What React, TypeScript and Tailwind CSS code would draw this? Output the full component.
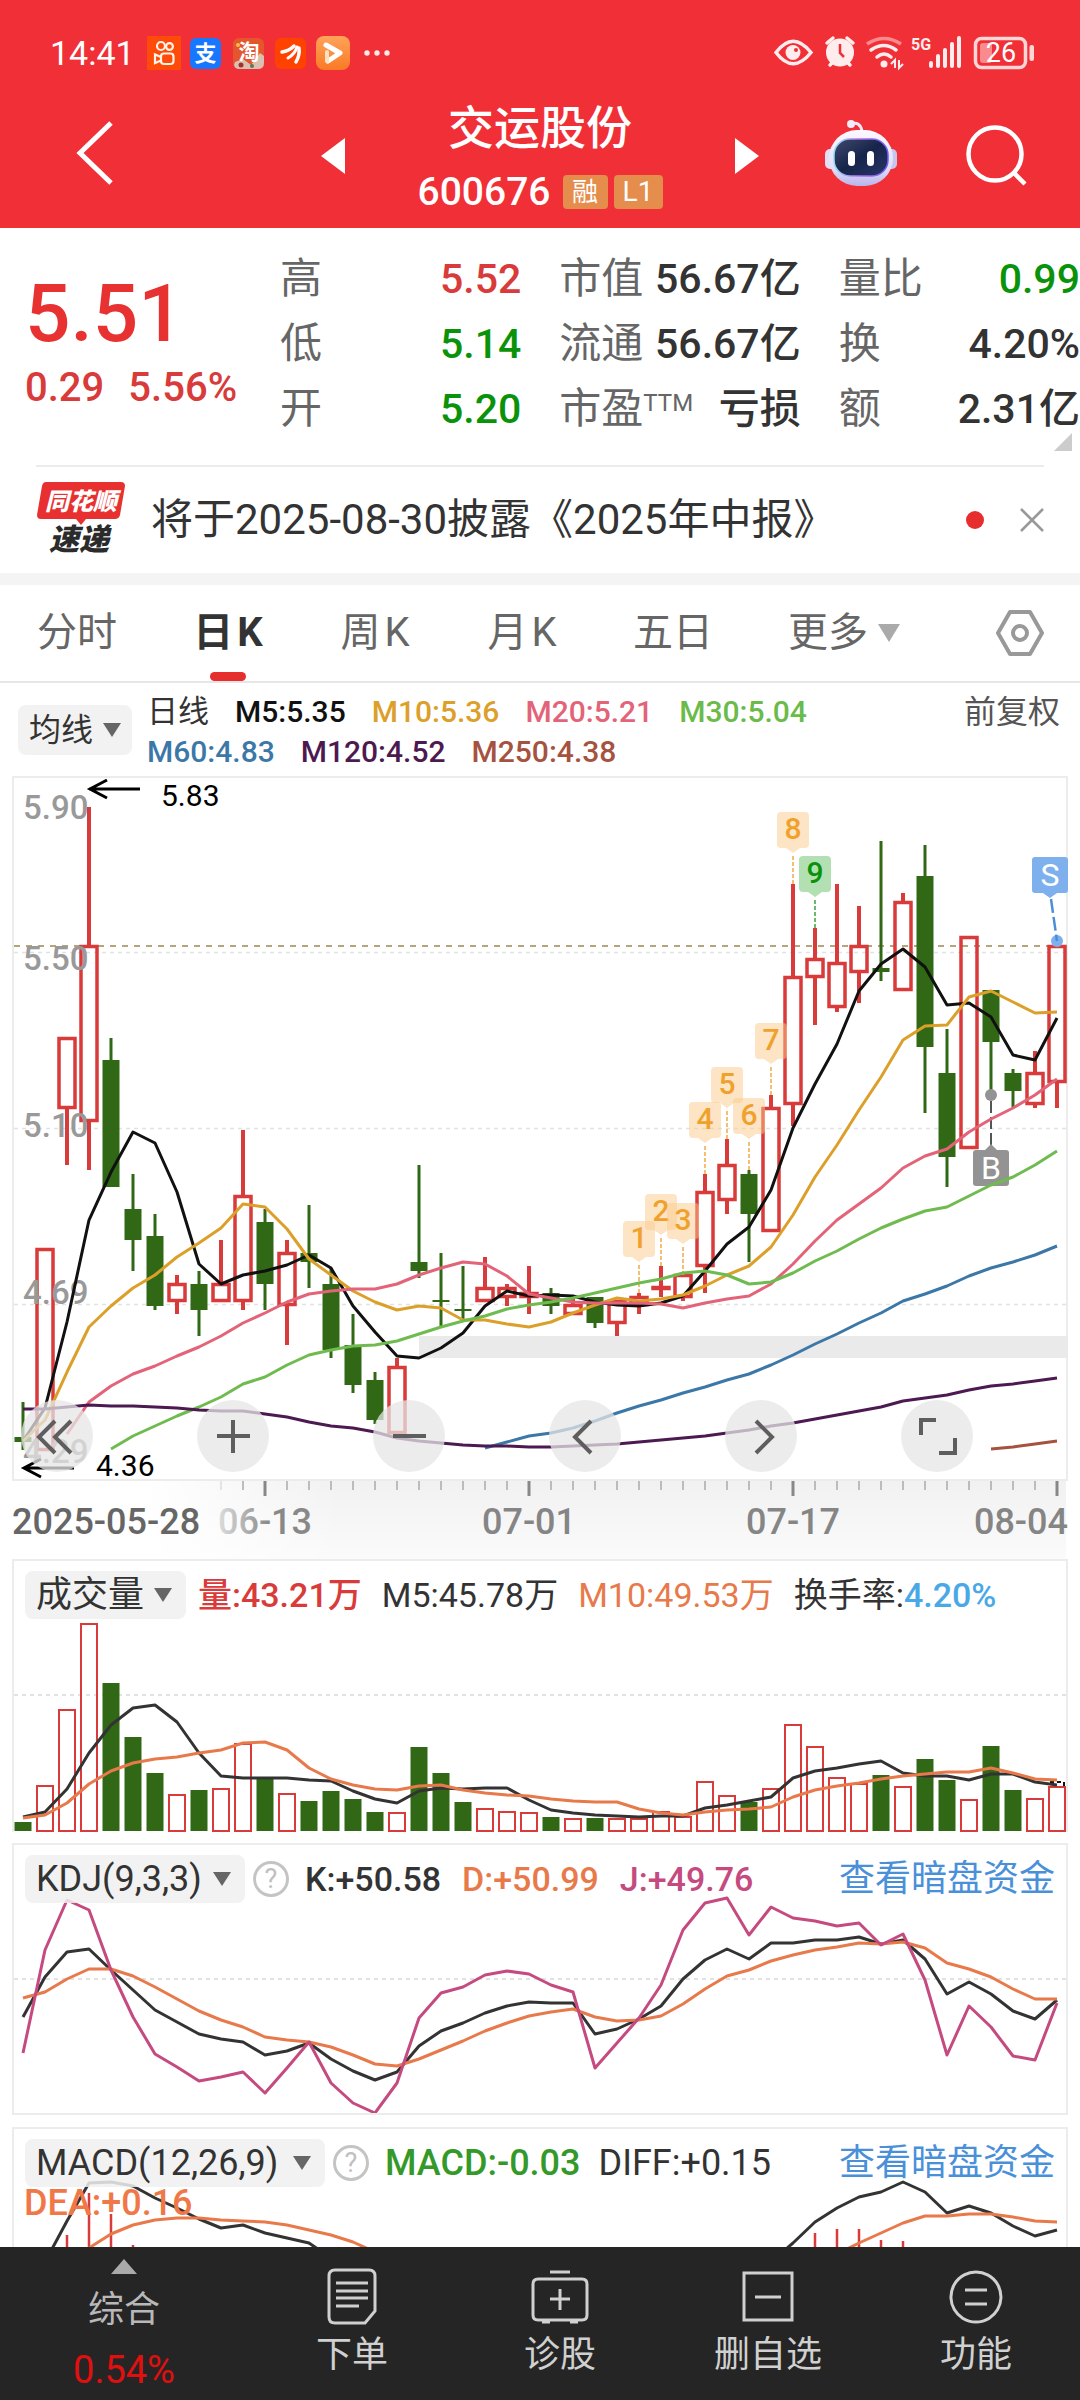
import React from "react";

const RED = "#d93a3a";
const GREEN = "#306815";
const X0 = 23;
const STEP = 22;
const xOf = (i: number) => X0 + STEP * i;

type Candle = [up: 0 | 1, high: number, top: number, bottom: number, low: number];

const candles: Candle[] = [
  [0, 1402, 1437, 1442, 1450], [1, 1248, 1248, 1451, 1451], [1, 1037, 1037, 1109, 1165], [1, 807, 945, 1122, 1170],
  [0, 1038, 1060, 1187, 1187], [0, 1174, 1209, 1240, 1271], [0, 1214, 1236, 1306, 1310], [1, 1275, 1283, 1302, 1314],
  [0, 1271, 1284, 1310, 1336], [1, 1240, 1283, 1302, 1302], [1, 1130, 1195, 1302, 1310], [0, 1209, 1222, 1284, 1310],
  [1, 1240, 1252, 1306, 1345], [0, 1205, 1253, 1262, 1288], [0, 1268, 1284, 1350, 1358], [0, 1314, 1345, 1385, 1393],
  [0, 1372, 1380, 1420, 1424], [1, 1358, 1366, 1434, 1434], [0, 1165, 1262, 1271, 1278], [0, 1253, 1300, 1302, 1327],
  [0, 1266, 1309, 1311, 1320], [1, 1257, 1287, 1302, 1302], [1, 1284, 1287, 1298, 1306], [1, 1266, 1292, 1298, 1314],
  [0, 1288, 1293, 1306, 1314], [1, 1298, 1304, 1315, 1315], [0, 1297, 1297, 1323, 1328], [1, 1300, 1300, 1324, 1336],
  [1, 1293, 1296, 1306, 1314], [1, 1266, 1286, 1290, 1297], [1, 1274, 1274, 1298, 1301], [1, 1174, 1191, 1267, 1293],
  [1, 1139, 1164, 1201, 1214], [0, 1170, 1174, 1214, 1262], [1, 1095, 1107, 1232, 1232], [1, 884, 976, 1105, 1126],
  [1, 928, 958, 978, 1025], [1, 884, 962, 1008, 1012], [1, 906, 945, 973, 1003], [0, 841, 968, 972, 981],
  [1, 893, 901, 991, 991], [0, 845, 876, 1047, 1113], [0, 1029, 1073, 1157, 1187], [1, 936, 936, 1149, 1149],
  [0, 990, 990, 1042, 1095], [0, 1069, 1073, 1091, 1107], [1, 1051, 1072, 1105, 1108], [1, 941, 945, 1083, 1108],
];

const averages: { color: string; start: number; ys: number[] }[] = [
  { color: "#111111", start: 0, ys: [1441, 1408, 1322, 1220, 1172, 1132, 1143, 1192, 1264, 1284, 1275, 1271, 1265, 1255, 1268, 1306, 1332, 1356, 1358, 1348, 1333, 1306, 1291, 1296, 1295, 1296, 1302, 1305, 1306, 1303, 1296, 1271, 1244, 1227, 1190, 1128, 1084, 1044, 991, 964, 949, 967, 1005, 1003, 1017, 1055, 1060, 1018] },
  { color: "#dca02a", start: 0, ys: [1441, 1420, 1372, 1327, 1306, 1288, 1275, 1257, 1243, 1228, 1204, 1207, 1229, 1259, 1275, 1291, 1302, 1310, 1306, 1308, 1320, 1320, 1324, 1327, 1322, 1313, 1305, 1298, 1301, 1299, 1295, 1286, 1275, 1266, 1247, 1215, 1177, 1145, 1110, 1077, 1040, 1026, 1025, 997, 991, 1002, 1013, 1012] },
  { color: "#e36378", start: 2, ys: [1434, 1402, 1386, 1374, 1366, 1356, 1347, 1336, 1323, 1313, 1302, 1294, 1291, 1289, 1289, 1284, 1275, 1268, 1262, 1264, 1276, 1294, 1298, 1302, 1303, 1303, 1303, 1304, 1308, 1303, 1299, 1296, 1284, 1264, 1241, 1220, 1204, 1188, 1168, 1156, 1149, 1132, 1119, 1108, 1095, 1079] },
  { color: "#6fbb50", start: 4, ys: [1449, 1436, 1426, 1416, 1407, 1397, 1384, 1377, 1365, 1355, 1350, 1346, 1345, 1341, 1334, 1327, 1321, 1316, 1309, 1305, 1302, 1298, 1293, 1288, 1283, 1279, 1273, 1271, 1275, 1284, 1282, 1273, 1261, 1251, 1239, 1228, 1219, 1211, 1207, 1196, 1185, 1177, 1165, 1151] },
  { color: "#3b78a8", start: 21, ys: [1448, 1442, 1436, 1433, 1428, 1421, 1413, 1406, 1400, 1393, 1387, 1380, 1374, 1365, 1355, 1344, 1334, 1323, 1313, 1301, 1294, 1286, 1276, 1268, 1262, 1255, 1246] },
  { color: "#4c1a50", start: 0, ys: [1409, 1409, 1407, 1405, 1406, 1406, 1407, 1408, 1410, 1411, 1411, 1414, 1417, 1422, 1426, 1428, 1432, 1438, 1441, 1443, 1445, 1446, 1446, 1447, 1447, 1446, 1445, 1444, 1442, 1440, 1438, 1436, 1433, 1430, 1426, 1423, 1419, 1415, 1411, 1407, 1401, 1398, 1395, 1390, 1386, 1384, 1381, 1378] },
  { color: "#a5523f", start: 44, ys: [1449, 1447, 1444, 1441] },
];

const volumeTops = [1822, 1785, 1709, 1623, 1683, 1737, 1773, 1794, 1790, 1788, 1743, 1778, 1793, 1801, 1791, 1799, 1812, 1812, 1747, 1773, 1802, 1808, 1811, 1812, 1817, 1818, 1818, 1818, 1818, 1811, 1816, 1781, 1795, 1802, 1788, 1724, 1746, 1777, 1783, 1775, 1786, 1759, 1780, 1799, 1746, 1790, 1798, 1786];
const volumeM5 = [1817, 1812, 1789, 1753, 1725, 1708, 1705, 1722, 1753, 1776, 1778, 1778, 1778, 1780, 1781, 1791, 1799, 1803, 1791, 1788, 1789, 1788, 1788, 1800, 1810, 1813, 1815, 1816, 1817, 1816, 1816, 1808, 1805, 1801, 1797, 1778, 1771, 1768, 1764, 1761, 1773, 1776, 1776, 1780, 1774, 1774, 1782, 1785];
const volumeM10 = [1818, 1815, 1803, 1784, 1771, 1763, 1759, 1757, 1753, 1750, 1743, 1742, 1750, 1768, 1779, 1785, 1789, 1790, 1786, 1785, 1790, 1793, 1795, 1796, 1799, 1801, 1802, 1802, 1809, 1813, 1815, 1812, 1810, 1809, 1807, 1797, 1790, 1786, 1783, 1779, 1776, 1774, 1772, 1772, 1768, 1773, 1779, 1780];

const kLine = [2017, 1977, 1952, 1949, 1970, 1990, 2010, 2022, 2034, 2039, 2042, 2055, 2051, 2043, 2059, 2071, 2080, 2072, 2046, 2031, 2023, 2013, 2006, 2002, 2003, 2003, 2034, 2029, 2019, 2006, 1979, 1960, 1949, 1959, 1943, 1943, 1940, 1940, 1937, 1944, 1940, 1959, 1994, 1982, 1994, 2011, 2019, 2000];
const dLine = [1998, 1992, 1979, 1969, 1969, 1976, 1987, 1999, 2011, 2020, 2027, 2037, 2040, 2042, 2047, 2055, 2064, 2066, 2059, 2050, 2041, 2031, 2023, 2016, 2012, 2009, 2017, 2021, 2020, 2016, 2004, 1989, 1976, 1970, 1961, 1955, 1950, 1947, 1943, 1944, 1942, 1948, 1963, 1969, 1977, 1989, 1999, 1999];
const jLine = [2053, 1950, 1900, 1910, 1970, 2017, 2054, 2067, 2081, 2077, 2072, 2093, 2068, 2042, 2083, 2103, 2113, 2083, 2018, 1993, 1987, 1975, 1971, 1974, 1985, 1992, 2068, 2043, 2018, 1985, 1930, 1903, 1898, 1935, 1907, 1918, 1921, 1926, 1923, 1945, 1934, 1980, 2055, 2006, 2027, 2056, 2060, 2003];

const diffLeft = [2262, 2221, 2183, 2182, 2186, 2198, 2208, 2219, 2228, 2225, 2233, 2238, 2243, 2258];
const diffRight = [2262, 2243, 2222, 2208, 2197, 2192, 2182, 2192, 2213, 2206, 2213, 2226, 2236, 2230];
const deaLeft = [2248, 2234, 2225, 2220, 2218, 2218, 2220, 2221, 2222, 2225, 2230, 2235, 2242, 2252];
const deaRight = [2254, 2243, 2233, 2223, 2216, 2216, 2214, 2214, 2217, 2221, 2222];
const macdBars: [number, number][] = [[2, 2235], [3, 2193], [4, 2214], [5, 2245], [36, 2233], [37, 2229], [38, 2229], [39, 2240], [40, 2241]];

const counts: [index: number, high: number, label: string][] = [
  [28, 1293, "1"], [29, 1266, "2"], [30, 1275, "3"], [31, 1174, "4"], [32, 1139, "5"],
  [33, 1170, "6"], [34, 1095, "7"], [35, 884, "8"], [36, 928, "9"],
];

function Line({ ys, color, start = 0, width = 3 }: { ys: number[]; color: string; start?: number; width?: number }) {
  return (
    <polyline
      points={ys.map((y, k) => `${xOf(start + k)},${y}`).join(" ")}
      fill="none"
      stroke={color}
      strokeWidth={width}
      strokeLinejoin="round"
    />
  );
}

function Caret({ className = "text-[#666]" }: { className?: string }) {
  return (
    <svg viewBox="0 0 18 14" className={`h-[14px] w-[18px] shrink-0 ${className}`} aria-hidden="true">
      <path d="M0 0H18L9 14Z" fill="currentColor" />
    </svg>
  );
}

function StatusBar() {
  return (
    <div className="flex items-center justify-between pt-8 pr-[46px] pl-[50px] text-white">
      <div className="flex h-[42px] items-center">
        <span className="w-[97px] text-[34px] leading-[42px]">14:41</span>
        <svg viewBox="0 0 34 34" className="size-[34px]" aria-hidden="true">
          <rect width="34" height="34" fill="#ff4b0a" />
          <g fill="none" stroke="#fff3e6" strokeWidth="2.2">
            <circle cx="14" cy="10" r="4" />
            <circle cx="22.500" cy="10.500" r="3.400" />
            <rect x="14" y="17.500" width="12.500" height="10.500" rx="3" />
            <path d="M14 21L8 18.500V27L14 24.500" />
          </g>
        </svg>
        <svg viewBox="0 0 31 31" className="ml-[9px] size-[31px]" aria-hidden="true">
          <rect width="31" height="31" rx="6" fill="#1777ff" />
          <text x="15.500" y="23" fontSize="22" fontWeight="700" textAnchor="middle" fill="#fff">支</text>
        </svg>
        <svg viewBox="0 0 31 31" className="ml-3 size-[31px]" aria-hidden="true">
          <rect width="31" height="31" rx="6" fill="#e4572e" />
          <path d="M2 24L10 21L18 27L27 15L31 18V25Q31 31 25 31H6Q2 31 1 27Z" fill="#d9c0b0" />
          <circle cx="8" cy="27" r="2.500" fill="#a5302a" />
          <circle cx="19" cy="28" r="2" fill="#5b7a52" />
          <circle cx="5" cy="7" r="2" fill="#f9c23c" />
          <text x="16" y="21" fontSize="21" fontWeight="700" textAnchor="middle" fill="#fff">淘</text>
        </svg>
        <svg viewBox="0 0 31 31" className="ml-[11px] size-[31px]" aria-hidden="true">
          <rect width="31" height="31" rx="6" fill="#ff4200" />
          <g fill="none" stroke="#fff" strokeLinecap="round">
            <path d="M7 14Q14 13 19 8" strokeWidth="3.500" />
            <path d="M13 20Q20 16 22 9" strokeWidth="3" />
            <path d="M21 24Q25 17 24 10" strokeWidth="3.500" />
          </g>
        </svg>
        <svg viewBox="0 0 34 34" className="ml-[10px] size-[34px]" aria-hidden="true">
          <defs>
            <linearGradient id="play" x1="0" y1="0" x2="0" y2="1">
              <stop offset="0" stopColor="#ffa35a" />
              <stop offset="1" stopColor="#f97a25" />
            </linearGradient>
          </defs>
          <rect width="34" height="34" rx="8" fill="url(#play)" />
          <path d="M10 9L24 17L12 25" fill="none" stroke="#fff" strokeWidth="5" strokeLinejoin="round" strokeLinecap="round" />
          <path d="M11 16V25" stroke="#ffe0c2" strokeWidth="4" strokeLinecap="round" />
        </svg>
        <svg viewBox="0 0 26 6" className="ml-[14px] h-[6px] w-[26px]" fill="#ffe9e9" aria-hidden="true">
          <circle cx="3" cy="3" r="2.700" /><circle cx="13" cy="3" r="2.700" /><circle cx="23" cy="3" r="2.700" />
        </svg>
      </div>
      <svg viewBox="772 34 262 38" className="h-[38px] w-[262px]" aria-hidden="true">
        <g fill="none" stroke="#ffecec" strokeWidth="3.500">
          <path d="M776 52.500Q793 30 811 52.500Q793 75 776 52.500Z" />
          <path d="M827 43L833 38M853 43L847 38M830 65L834 61M850 65L846 61" strokeLinecap="round" />
          <path d="M871 50Q884 41 896 50M877 57Q884 51 891 57" strokeLinecap="round" />
          <path d="M867 44Q884 33 901 44" stroke="#f98a8e" />
          <rect x="975.500" y="38.500" width="50" height="29" rx="6" stroke="#ffd5d6" />
        </g>
        <circle cx="793" cy="52.500" r="7.500" fill="#ffecec" />
        <circle cx="796" cy="50" r="2" fill="#f12f37" />
        <circle cx="840" cy="52.500" r="14" fill="#ffecec" />
        <path d="M840 44V53L844 57" fill="none" stroke="#f12f37" strokeWidth="2.500" />
        <circle cx="884" cy="64" r="3.500" fill="#ffecec" />
        <path d="M895 68V60L891 64M899 60V68L903 64" fill="none" stroke="#ffecec" strokeWidth="2" />
        <text x="911" y="50" fontSize="16" fontWeight="700" fill="#ffecec">5G</text>
        <path d="M931 63V66M938 56V66M945 50V66M952 44V66M959 38V66" stroke="#ffecec" strokeWidth="4" strokeLinecap="round" />
        <rect x="980" y="43" width="12" height="20" rx="3" fill="#f98a8e" />
        <rect x="1029.500" y="45" width="4.500" height="16" rx="2" fill="#ffd5d6" />
        <text x="1001" y="62" fontSize="27" textAnchor="middle" fill="#fff">26</text>
      </svg>
    </div>
  );
}

function Header() {
  return (
    <header className="flex h-[154px] items-start pr-[53px] pl-[76px] text-white">
      <button type="button" aria-label="返回" className="mt-[46px]">
        <svg viewBox="0 0 38 66" className="h-[66px] w-[38px]" fill="none" stroke="#fff" strokeWidth="5">
          <path d="M35 3L4 33L35 63" />
        </svg>
      </button>
      <div className="flex flex-1 items-start justify-end pr-[65px]">
        <button type="button" aria-label="上一只" className="mt-[64px]">
          <svg viewBox="0 0 24 36" className="h-9 w-6" fill="#fff"><path d="M24 0V36L0 18Z" /></svg>
        </button>
        <div className="mt-[27px] flex w-[390px] flex-col items-center">
          <h1 className="text-[46px] leading-[54px] font-medium">交运股份</h1>
          <div className="mt-[13px] flex items-center gap-[6px]">
            <span className="mr-[6px] text-[39px] leading-[48px] font-medium">600676</span>
            <span className="flex h-[34px] w-[45px] items-center justify-center rounded-[4px] bg-[#e58d4c] text-[26px] leading-[34px]">融</span>
            <span className="flex h-[34px] w-[49px] items-center justify-center rounded-[4px] bg-[#e58d4c] text-[28px] leading-[34px]">L1</span>
          </div>
        </div>
        <button type="button" aria-label="下一只" className="mt-[64px]">
          <svg viewBox="0 0 24 36" className="h-9 w-6" fill="#fff"><path d="M0 0V36L24 18Z" /></svg>
        </button>
      </div>
      <button type="button" aria-label="智能助手" className="mt-[44px]">
        <svg viewBox="824 118 74 70" className="h-[70px] w-[74px]">
          <defs>
            <linearGradient id="shell" x1="0" y1="0" x2="0" y2="1">
              <stop offset="0" stopColor="#fdf9ff" />
              <stop offset="0.700" stopColor="#e0dcf8" />
              <stop offset="1" stopColor="#b9b4ea" />
            </linearGradient>
            <linearGradient id="visor" x1="0" y1="0" x2="1" y2="1">
              <stop offset="0" stopColor="#3f4a6c" />
              <stop offset="0.500" stopColor="#17244a" />
              <stop offset="1" stopColor="#28366a" />
            </linearGradient>
            <linearGradient id="rim" x1="0" y1="0" x2="1" y2="0">
              <stop offset="0" stopColor="#8fdcf5" />
              <stop offset="0.500" stopColor="#b46be8" />
              <stop offset="1" stopColor="#6a5cf0" />
            </linearGradient>
          </defs>
          <path d="M851 124Q860 121 862 131" fill="none" stroke="#eceaf8" strokeWidth="3" />
          <circle cx="851" cy="124" r="4" fill="#f3ecfb" />
          <rect x="825" y="149" width="12" height="20" rx="5" fill="#e2def6" />
          <rect x="885" y="149" width="12" height="20" rx="5" fill="#c9c4ee" />
          <rect x="829" y="130" width="64" height="56" rx="28" fill="url(#shell)" />
          <rect x="834" y="139" width="54" height="37" rx="16" fill="url(#visor)" stroke="url(#rim)" strokeWidth="1.500" />
          <rect x="848" y="151" width="7" height="15" rx="3.500" fill="#fff" />
          <rect x="867" y="151" width="7" height="15" rx="3.500" fill="#fff" />
        </svg>
      </button>
      <button type="button" aria-label="搜索" className="mt-[50px] ml-[67px]">
        <svg viewBox="0 0 62 62" className="size-[62px]" fill="none" stroke="#fff" strokeWidth="4.500">
          <circle cx="30" cy="30" r="26.500" />
          <path d="M48 48L60 60" />
        </svg>
      </button>
    </header>
  );
}

const quotes: { label: React.ReactNode; value: string; tone: string }[] = [
  { label: "高", value: "5.52", tone: "text-[#d93a3a]" },
  { label: "市值", value: "56.67亿", tone: "text-[#333]" },
  { label: "量比", value: "0.99", tone: "text-[#0a930a]" },
  { label: "低", value: "5.14", tone: "text-[#0a930a]" },
  { label: "流通", value: "56.67亿", tone: "text-[#333]" },
  { label: "换", value: "4.20%", tone: "text-[#333]" },
  { label: "开", value: "5.20", tone: "text-[#0a930a]" },
  { label: <>市盈<sup className="top-[-12px] text-[24px] leading-none">TTM</sup></>, value: "亏损", tone: "text-[#333]" },
  { label: "额", value: "2.31亿", tone: "text-[#333]" },
];

function Quote() {
  return (
    <section className="relative flex pt-[18px] pb-6">
      <div className="w-[280px] shrink-0 pl-[25px] text-[#e83232]">
        <div className="mt-[18px] text-[80px] leading-[100px] font-medium">5.51</div>
        <div className="flex gap-[24px] text-[40px] leading-[48px] font-medium text-[#d93a3a]">
          <span>0.29</span>
          <span>5.56%</span>
        </div>
      </div>
      <dl className="grid flex-1 grid-cols-3 gap-x-[38px]">
        {quotes.map((q, i) => (
          <div key={i} className="flex h-[65px] items-center justify-between whitespace-nowrap">
            <dt className="text-[42px] leading-[64px] text-[#666]">{q.label}</dt>
            <dd className={`text-[41px] leading-[64px] font-medium ${q.tone}`}>{q.value}</dd>
          </div>
        ))}
      </dl>
      <svg viewBox="0 0 18 18" className="absolute right-2 bottom-[14px] size-[18px]" aria-hidden="true">
        <path d="M18 0V18H0Z" fill="#ccc" />
      </svg>
    </section>
  );
}

function Notice() {
  return (
    <section className="mx-9 flex h-[108px] items-center border-t-2 border-[#ececec]">
      <svg viewBox="36 480 90 82" className="h-[82px] w-[90px] shrink-0 overflow-visible" role="img" aria-label="同花顺速递">
        <path d="M46 483H121Q125 483 125 487L120 516Q119 520 115 520H86L81 526L76 520H41Q37 520 37 516L42 487Q43 483 46 483Z" fill="#e83030" />
        <text x="81" y="511" fontSize="24" fontWeight="900" fontStyle="italic" textAnchor="middle" fill="#fff">同花顺</text>
        <text x="79" y="551" fontSize="30" fontWeight="900" fontStyle="italic" textAnchor="middle" fill="#2b2b2b">速递</text>
      </svg>
      <a href="#report" className="ml-[25px] flex-1 text-[42px] leading-[56px] whitespace-nowrap text-[#333]">将于2025-08-30披露《2025年中报》</a>
      <span className="size-[18px] rounded-full bg-[#e62e2e]" />
      <button type="button" aria-label="关闭" className="ml-9">
        <svg viewBox="0 0 24 24" className="size-6" stroke="#999" strokeWidth="2.500"><path d="M1 1L23 23M23 1L1 23" /></svg>
      </button>
    </section>
  );
}

function Tabs() {
  const base = "relative flex h-24 min-w-[72px] items-center justify-center gap-1 whitespace-nowrap";
  return (
    <nav className="flex items-center gap-[75px] border-b-2 border-[#e6e6e6] pr-9 pl-[37px] text-[40px] leading-[56px] text-[#666]">
      <button type="button" className={base}>分时</button>
      <button type="button" className={`${base} font-bold text-[#333]`}>
        日<span>K</span>
        <span className="absolute bottom-0 left-1/2 h-[9px] w-9 -translate-x-1/2 rounded-full bg-[#e62e2e]" />
      </button>
      <button type="button" className={base}>周<span>K</span></button>
      <button type="button" className={base}>月<span>K</span></button>
      <button type="button" className={base}>五日</button>
      <button type="button" className={`${base} gap-[10px]`}>
        更多
        <svg viewBox="0 0 22 18" className="h-[18px] w-[22px]" fill="#aaa"><path d="M0 0H22L11 18Z" /></svg>
      </button>
      <button type="button" aria-label="设置" className="ml-auto">
        <svg viewBox="0 0 48 48" className="size-12" fill="none" stroke="#999" strokeWidth="4">
          <path d="M14 3H34L46 24L34 45H14L2 24Z" strokeLinejoin="round" />
          <circle cx="24" cy="24" r="7" />
        </svg>
      </button>
    </nav>
  );
}

function AverageLegend() {
  return (
    <div className="flex items-start pr-5 pb-[4px] pl-[18px] text-[30px] leading-[40px]">
      <button type="button" className="mt-[22px] flex h-[50px] w-[114px] shrink-0 items-center justify-center gap-[10px] rounded-lg bg-[#f2f2f2] text-[32px] text-[#333]">
        均线<Caret />
      </button>
      <div className="mt-[9px] ml-[15px] flex-1">
        <div className="flex gap-[26px] font-medium whitespace-nowrap">
          <span className="text-[31px] font-normal text-[#333]">日线</span>
          <span className="text-[#111]">M5:5.35</span>
          <span className="text-[#dca02a]">M10:5.36</span>
          <span className="text-[#e36378]">M20:5.21</span>
          <span className="text-[#6abb4a]">M30:5.04</span>
          <span className="ml-auto text-[32px] font-normal text-[#555]">前复权</span>
        </div>
        <div className="flex gap-[26px] font-medium whitespace-nowrap">
          <span className="text-[#3b78a8]">M60:4.83</span>
          <span className="text-[#4c1a50]">M120:4.52</span>
          <span className="text-[#a5523f]">M250:4.38</span>
        </div>
      </div>
    </div>
  );
}

function CandleChart() {
  const tools: [string, React.ReactNode][] = [
    ["最早", <path key="a" d="M34 21L18 37L34 53M50 21L34 37L50 53" />],
    ["放大", <path key="b" d="M20 36H53M36 20V53" />],
    ["缩小", <path key="c" d="M20 36H53" />],
    ["左移", <path key="d" d="M42 21L26 37L42 53" />],
    ["右移", <path key="e" d="M31 21L47 37L31 53" />],
    ["全屏", <path key="f" d="M20 35V20H35M54 38V53H38" />],
  ];
  return (
    <section className="relative mx-3 border-2 border-[#ececec]">
      <svg viewBox="14 778 1052 701" className="block h-auto w-full overflow-visible">
        <rect x="419" y="1336" width="649" height="22" fill="#eaeaea" />
        <g stroke="#e2e2e2" strokeDasharray="4 4" strokeWidth="1.500">
          <path d="M14 952.500H1066M14 1128.500H1066M14 1304.500H1066" />
        </g>
        <path d="M14 946H1066" stroke="#b5a57c" strokeDasharray="6 6" strokeWidth="2" />
        {candles.map(([up, high, top, bottom, low], i) => {
          const x = xOf(i);
          return up ? (
            <g key={i} fill="none" stroke={RED}>
              <path d={`M${x} ${high}V${top}M${x} ${bottom}V${low}`} strokeWidth="4" />
              <rect x={x - 8} y={top + 1.5} width="16" height={Math.max(bottom - top - 3, 1)} strokeWidth="3.500" />
            </g>
          ) : (
            <g key={i} fill={GREEN}>
              <rect x={x - 1.5} y={high} width="3" height={low - high} />
              <rect x={x - 8.5} y={top} width="17" height={bottom - top} />
            </g>
          );
        })}
        <g fontSize="33" fontWeight="500" fill="#999">
          <text x="23" y="819">5.90</text>
          <text x="23" y="970">5.50</text>
          <text x="23" y="1137">5.10</text>
          <text x="23" y="1304">4.69</text>
          <text x="23" y="1463">4.29</text>
        </g>
        {counts.map(([i, high, label]) => {
          const x = xOf(i);
          const green = label === "9";
          return (
            <g key={label}>
              <path d={`M${x} ${high - 28}V${high}`} stroke={green ? "#6cb86c" : "#f5bf73"} strokeWidth="2" strokeDasharray="4 2" />
              <path
                d={`M${x - 12} ${high - 72}h24q4 0 4 4v28q0 4 -4 4h-5l-7 5l-7 -5h-5q-4 0 -4 -4v-28q0 -4 4 -4Z`}
                fill={green ? "#67c267" : "#fcc98a"}
                fillOpacity="0.500"
              />
              <text x={x} y={high - 45} fontSize="30" fontWeight="500" textAnchor="middle" fill={green ? "#0a930a" : "#f0a12c"}>{label}</text>
            </g>
          );
        })}
        <circle cx="991" cy="1095" r="6" fill="#939393" />
        <path d="M991 1101V1146" stroke="#555" strokeWidth="2" strokeDasharray="12 4" />
        <path d="M976 1150H985L991 1144L997 1150H1006Q1009 1150 1009 1153V1183Q1009 1186 1006 1186H976Q973 1186 973 1183V1153Q973 1150 976 1150Z" fill="#939393" />
        <text x="991" y="1179" fontSize="32" textAnchor="middle" fill="#fff">B</text>
        <circle cx="1057" cy="941" r="6" fill="#7eb0ee" />
        <path d="M1051 899L1057 941" stroke="#4a8fd8" strokeWidth="2.500" strokeDasharray="14 4" />
        <path d="M1035 857H1065Q1068 857 1068 860V890Q1068 893 1065 893H1057L1050 898L1043 893H1035Q1032 893 1032 890V860Q1032 857 1035 857Z" fill="#7eb0ee" />
        <text x="1050" y="886" fontSize="32" textAnchor="middle" fill="#fff">S</text>
        {averages.map((a) => <Line key={a.color} {...a} />)}
        <g fill="none" stroke="#000" strokeWidth="3">
          <path d="M140 789H89M107 780L90 789L107 798" />
          <path d="M74 1468H24M41 1459L24 1468L41 1477" />
        </g>
        <g fontSize="30" fill="#000">
          <text x="161" y="806">5.83</text>
          <text x="96" y="1476">4.36</text>
        </g>
      </svg>
      <div className="absolute right-[93px] bottom-[7px] left-[7px] flex justify-between">
        {tools.map(([name, icon]) => (
          <button key={name} type="button" aria-label={name} className="size-[72px] rounded-full bg-[#e6e6e6]/75">
            <svg viewBox="0 0 72 72" className="size-full" fill="none" stroke="#5e5e5e" strokeWidth="4">{icon}</svg>
          </button>
        ))}
      </div>
    </section>
  );
}

function DateAxis() {
  return (
    <div className="mx-[14px] bg-linear-to-b from-[#f1f1f1] to-[#fbfbfb]">
      <svg viewBox="14 1481 1052 78" className="block h-auto w-full overflow-visible">
        <defs>
          <linearGradient id="dateFade" x1="0" y1="0" x2="1" y2="0">
            <stop offset="0" stopColor="#ddd" />
            <stop offset="0.550" stopColor="#888" />
          </linearGradient>
          <linearGradient id="axisFade" x1="0" y1="0" x2="1" y2="0">
            <stop offset="0.400" stopColor="#fff" />
            <stop offset="1" stopColor="#fff" stopOpacity="0" />
          </linearGradient>
        </defs>
        <rect x="12" y="1481" width="330" height="78" fill="url(#axisFade)" />
        {candles.map((_, i) => {
          if (i < 9) return null;
          const major = i % 12 === 11;
          return <path key={i} d={`M${xOf(i)} 1481V${major ? 1496 : 1490}`} stroke={major ? "#888" : i === 9 ? "#ddd" : "#aaa"} strokeWidth={major ? 3 : 1.5} />;
        })}
        <g fontSize="36" fontWeight="500" fill="#858585" textAnchor="middle">
          <text x="12" y="1534" textAnchor="start" fill="#666">2025-05-28</text>
          <text x="265" y="1534" fill="url(#dateFade)">06-13</text>
          <text x="529" y="1534">07-01</text>
          <text x="793" y="1534">07-17</text>
          <text x="1068" y="1534" textAnchor="end">08-04</text>
        </g>
      </svg>
    </div>
  );
}

const headerRow = "relative z-10 flex h-12 items-center pr-[11px] pl-[11px] text-[34px] leading-[48px] whitespace-nowrap";
const picker = "flex h-12 shrink-0 items-center justify-between rounded-lg bg-[#f0f0f0]/85 pr-[14px] pl-[11px] text-[36px] text-[#333]";

function Help() {
  return (
    <button type="button" aria-label="指标说明" className="mx-2 flex size-9 shrink-0 items-center justify-center rounded-full border-3 border-[#c4c4c4] text-[27px] leading-none text-[#c0c0c0]">?</button>
  );
}

function VolumePanel() {
  return (
    <section className="mx-3 border-x-2 border-t-2 border-[#ececec] pt-[10px]">
      <div className={`${headerRow} gap-[20px]`}>
        <button type="button" className={`${picker} w-[161px]`}>成交量<Caret /></button>
        <span className="-ml-2 font-medium text-[#d93a3a]">量:43.21万</span>
        <span className="text-[#333]">M5:45.78万</span>
        <span className="text-[#e8794a]">M10:49.53万</span>
        <span className="text-[#333]">换手率:<span className="font-medium text-[#49a9e6]">4.20%</span></span>
      </div>
      <svg viewBox="14 1619 1052 213" className="block h-auto w-full overflow-visible">
        <path d="M14 1695H1066" stroke="#e2e2e2" strokeWidth="2" strokeDasharray="4 4" />
        {volumeTops.map((top, i) =>
          candles[i][0] ? (
            <rect key={i} x={xOf(i) - 8} y={top + 1} width="16" height={1830 - top} fill="none" stroke={RED} strokeWidth="2" />
          ) : (
            <rect key={i} x={xOf(i) - 8.5} y={top} width="17" height={1831 - top} fill={GREEN} />
          )
        )}
        <path d="M1050 1782H1064V1787" fill="none" stroke="#111" strokeWidth="2" strokeDasharray="4 3" />
        <Line ys={volumeM5} color="#333333" />
        <Line ys={volumeM10} color="#e8794a" />
      </svg>
    </section>
  );
}

function KdjPanel() {
  return (
    <section className="mx-3 mt-[11px] border-2 border-[#ececec] pt-[10px]">
      <div className={headerRow}>
        <button type="button" className={`${picker} w-[220px]`}>KDJ(9,3,3)<Caret /></button>
        <Help />
        <div className="ml-2 flex gap-[21px] font-medium">
          <span className="text-[#333]">K:+50.58</span>
          <span className="text-[#e8794a]">D:+50.99</span>
          <span className="text-[#c54a80]">J:+49.76</span>
        </div>
        <a href="#kdj-funds" className="ml-auto text-[36px] text-[#4a90d9]">查看暗盘资金</a>
      </div>
      <svg viewBox="14 1895 1052 218" className="-mt-2 block h-auto w-full">
        <path d="M14 1979H1066" stroke="#e2e2e2" strokeWidth="2" strokeDasharray="4 4" />
        <Line ys={kLine} color="#333333" />
        <Line ys={dLine} color="#e8794a" />
        <Line ys={jLine} color="#c54a80" />
      </svg>
    </section>
  );
}

function MacdPanel() {
  return (
    <section className="relative mx-3 mt-3 border-x-2 border-t-2 border-[#ececec] pt-[10px]">
      <div className={headerRow}>
        <button type="button" className={`${picker} w-[300px]`}>MACD(12,26,9)<Caret /></button>
        <Help />
        <div className="ml-2 flex gap-[18px] text-[36px]">
          <span className="font-medium text-[#35992a]">MACD:-0.03</span>
          <span className="text-[#333]">DIFF:+0.15</span>
        </div>
        <a href="#macd-funds" className="ml-auto text-[36px] text-[#4a90d9]">查看暗盘资金</a>
      </div>
      <svg viewBox="14 2179 1052 68" className="-mt-2 block h-auto w-full">
        {macdBars.map(([i, top]) => <path key={i} d={`M${xOf(i)} ${top}V2247`} stroke={RED} strokeWidth="2.500" />)}
        <Line ys={diffLeft} start={1} color="#333333" />
        <Line ys={diffRight} start={34} color="#333333" />
        <Line ys={deaLeft} start={3} color="#e8794a" />
        <Line ys={deaRight} start={37} color="#e8794a" />
      </svg>
      <span className="absolute top-[52px] left-[10px] text-[36px] leading-[44px] font-medium text-[#f07848]">DEA:+0.16</span>
    </section>
  );
}

function BottomNav() {
  const items: [string, React.ReactNode][] = [
    ["下单", <path key="a" d="M11 3H45Q51 3 51 9V44L41 56H11Q5 56 5 50V9Q5 3 11 3ZM12 16H44M12 24H44M12 31H44M12 39H35" />],
    ["诊股", <path key="b" d="M18 5H38M6 12H50Q55 12 55 17V48Q55 53 50 53H6Q1 53 1 48V17Q1 12 6 12ZM10 55H18M38 55H46M28 22V43M18 32H38" />],
    ["删自选", <path key="c" d="M4 6H52V53H4ZM15 30H41" />],
    ["功能", <path key="d" d="M28 5A25 25 0 1 1 27.900 5ZM17 23H39M17 37H39" />],
  ];
  return (
    <nav className="sticky bottom-0 z-20 grid h-[153px] grid-cols-[248fr_208fr_208fr_208fr_208fr] bg-[#252525] text-[36px] leading-[48px] text-[#d0d0d0]">
      <button type="button" className="flex flex-col items-center pt-3 text-[#b8b8b8]">
        <svg viewBox="0 0 26 15" className="h-[15px] w-[26px]" fill="#aaa"><path d="M13 0L26 15H0Z" /></svg>
        <span className="mt-3">综合</span>
        <span className="mt-3 text-[38px] text-[#e01010]">0.54%</span>
      </button>
      {items.map(([label, icon]) => (
        <button key={label} type="button" className="flex flex-col items-center pt-5">
          <svg viewBox="0 0 56 58" className="h-[58px] w-14 overflow-visible" fill="none" stroke="currentColor" strokeWidth="3">{icon}</svg>
          <span className="mt-[6px]">{label}</span>
        </button>
      ))}
    </nav>
  );
}

export default function App() {
  return (
    <div className="min-h-screen bg-white font-[Roboto,'Noto_Sans_CJK_SC',sans-serif]">
      <div className="bg-[#f12f37]">
        <StatusBar />
        <Header />
      </div>
      <main>
        <Quote />
        <Notice />
        <div className="h-3 bg-[#f4f4f4]" />
        <Tabs />
        <AverageLegend />
        <CandleChart />
        <DateAxis />
        <VolumePanel />
        <KdjPanel />
        <MacdPanel />
      </main>
      <BottomNav />
    </div>
  );
}
